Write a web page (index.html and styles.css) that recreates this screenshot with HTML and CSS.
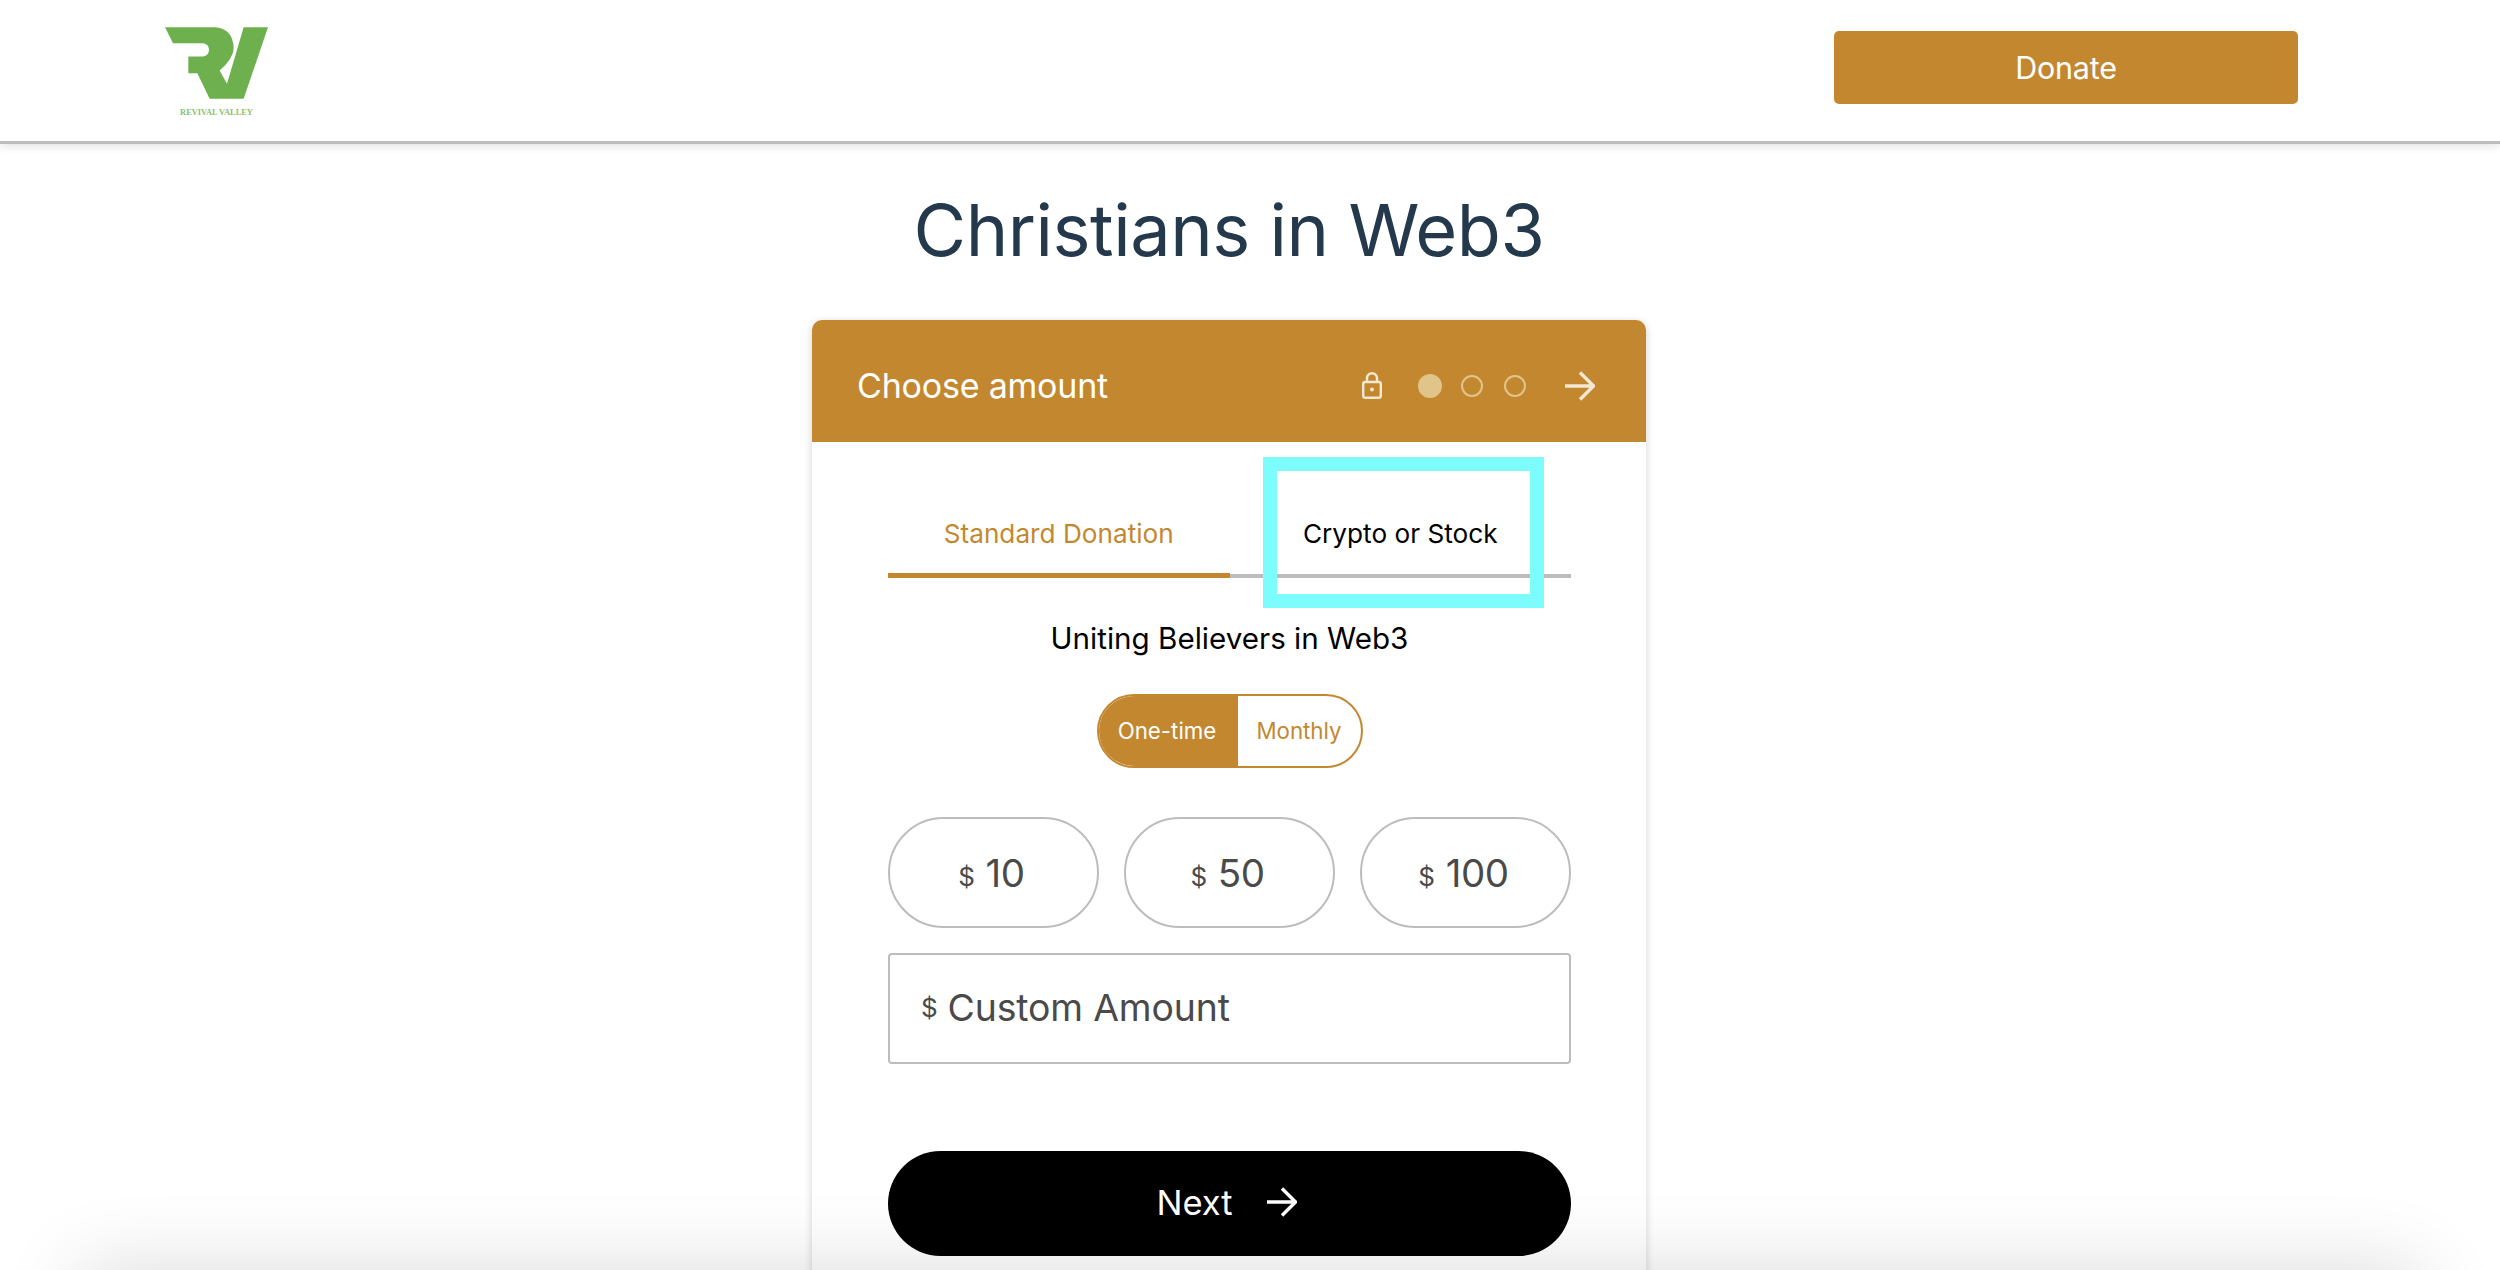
FILE: index.html

```html
<!DOCTYPE html>
<html lang="en">
<head>
    <meta charset="utf-8">
    <title>Christians in Web3</title>
    <link rel="stylesheet" href="styles.css">
</head>
<body>
    <header class="site-nav">
        <a class="logo" href="#">
            <svg class="logo-mark" viewBox="136 82 309 215" aria-hidden="true">
                <path d="M136 82 H285 Q340 85 342 145 Q342 175 300 212 L322 252 L372 82 H445 L372 297 H270 L233 220 H206 V170 H250 Q268 168 268 150 Q268 132 250 130 H160 Z"/>
            </svg>
            <span class="logo-text">REVIVAL VALLEY</span>
        </a>
        <button type="button" class="donate-btn">Donate</button>
    </header>

    <main class="page">
        <h1 class="page-title">Christians in Web3</h1>

        <section class="card">
            <div class="card-head">
                <h2 class="card-title">Choose amount</h2>
                <div class="steps">
                    <svg class="lock-icon" viewBox="0 0 20 27" aria-hidden="true">
                        <rect x="1.2" y="10" width="17.6" height="15.8" rx="2"/>
                        <path d="M5 10 V6.2 a5 5 0 0 1 10 0 V10"/>
                        <circle class="lock-dot" cx="10" cy="17.5" r="2"/>
                    </svg>
                    <span class="step step-on"></span>
                    <span class="step"></span>
                    <span class="step"></span>
                    <svg class="step-arrow" viewBox="0 0 30 30" aria-hidden="true">
                        <path d="M0 15 H28 M15 1.5 L28.5 15 L15 28.5"/>
                    </svg>
                </div>
            </div>

            <div class="card-body">
                <div class="tabs">
                    <div class="tab tab-on">Standard Donation</div>
                    <div class="tab">Crypto or Stock<span class="tab-mark"></span></div>
                </div>

                <p class="cause">Uniting Believers in Web3</p>

                <div class="freq">
                    <div class="freq-opt freq-on">One-time</div>
                    <div class="freq-opt">Monthly</div>
                </div>

                <div class="amounts">
                    <button type="button" class="amount"><span class="cur">$</span>10</button>
                    <button type="button" class="amount"><span class="cur">$</span>50</button>
                    <button type="button" class="amount"><span class="cur">$</span>100</button>
                </div>

                <div class="custom"><span class="cur cur-small">$</span>Custom Amount</div>

                <button type="button" class="next-btn">
                    Next
                    <svg class="next-arrow" viewBox="0 0 30 30" aria-hidden="true">
                        <path d="M0 15 H28 M15 1.5 L28.5 15 L15 28.5"/>
                    </svg>
                </button>
            </div>
        </section>
    </main>

    <div class="bottom-fade"></div>
</body>
</html>
```

FILE: styles.css

```css
html, body {
  height: 100%;
}

body {
  margin: 0;
  overflow: hidden;
  background-color: #FFF;
  color: #000;
  font-family: Inter, "Liberation Sans", sans-serif;
}

button {
  border: none;
  font-family: inherit;
  cursor: pointer;
}

.site-nav {
  display: flex;
  justify-content: space-between;
  align-items: flex-start;
  box-sizing: border-box;
  height: 144px;
  padding: 27px 202px 0 165px;
  border-bottom: 3px solid #BDBDBD;
  box-shadow: 0 3px 8px rgba(0, 0, 0, 0.1);
}

.logo {
  display: flex;
  flex-direction: column;
  align-items: center;
  width: 103px;
  text-decoration: none;
}

.logo-mark {
  width: 103px;
  height: 72px;
  fill: #6FB04E;
}

.logo-text {
  margin-top: 9px;
  color: #8CC070;
  font-family: "Liberation Serif", serif;
  font-size: 8.4px;
  font-weight: bold;
  white-space: nowrap;
}

.donate-btn {
  width: 464px;
  height: 73px;
  margin-top: 4px;
  background-color: #C3882F;
  color: #FFF;
  border-radius: 5px;
  font-size: 30.5px;
  letter-spacing: -0.2px;
}

.page {
  padding-right: 42px;
}

.page-title {
  margin: 39px 0 0;
  color: #24394C;
  font-size: 72px;
  font-weight: 400;
  letter-spacing: -0.45px;
  line-height: 93px;
  text-align: center;
}

.card {
  width: 834px;
  margin: 44px auto 0;
  border-radius: 10px 10px 0 0;
  box-shadow: 0 2px 8px rgba(0, 0, 0, 0.18);
}

.card-head {
  display: flex;
  justify-content: space-between;
  align-items: center;
  box-sizing: border-box;
  height: 122px;
  padding: 9px 51px 0 45px;
  background-color: #C3882F;
  border-radius: 10px 10px 0 0;
}

.card-title {
  margin: 0;
  color: #FFF;
  font-size: 34px;
  font-weight: 400;
  letter-spacing: -0.2px;
}

.steps {
  display: flex;
  align-items: center;
}

.lock-icon {
  width: 20px;
  height: 27px;
  margin-right: 36px;
  fill: none;
  stroke: #F5E8D2;
  stroke-width: 2.4;
}

.lock-dot {
  fill: #F5E8D2;
  stroke: none;
}

.step {
  box-sizing: border-box;
  width: 22px;
  height: 22px;
  margin-right: 21px;
  border: 2px solid #E0C48A;
  border-radius: 50%;
}

.step-on {
  width: 24px;
  height: 24px;
  margin-right: 19px;
  background-color: #E0C48A;
}

.step-arrow {
  width: 30px;
  height: 30px;
  margin-left: 18px;
  fill: none;
  stroke: #F5E8D2;
  stroke-width: 3.4;
}

.card-body {
  padding: 48px 75px 40px 76px;
  background-color: #FFF;
}

.tabs {
  display: flex;
  align-items: flex-end;
}

.tab {
  position: relative;
  flex: 1;
  height: 84px;
  border-bottom: 4px solid #BDBDBD;
  font-size: 26.2px;
  line-height: 87px;
  text-align: center;
}

.tab-on {
  height: 83px;
  border-bottom: 5px solid #C3882F;
  color: #C3882F;
}

/* caixa de destaque por cima da aba */
.tab-mark {
  position: absolute;
  top: -33px;
  left: 33px;
  width: 253px;
  height: 123px;
  border: 14px solid #7CFCFC;
}

.cause {
  margin: 40px 0 0;
  font-size: 29.6px;
  line-height: 40px;
  text-align: center;
}

.freq {
  display: flex;
  box-sizing: border-box;
  width: 266px;
  height: 74px;
  margin: 36px auto 0;
  border: 2px solid #C3882F;
  border-radius: 37px;
  overflow: hidden;
  font-size: 22.3px;
  line-height: 70px;
  text-align: center;
}

.freq-opt {
  flex: 1;
  color: #C3882F;
}

.freq-on {
  flex: 0 0 139px;
  padding-right: 2px;
  box-sizing: border-box;
  background-color: #C3882F;
  color: #FFF;
}

.amounts {
  display: grid;
  grid-template-columns: repeat(3, 1fr);
  gap: 25px;
  margin-top: 49px;
}

.amount {
  height: 111px;
  padding: 0 4px 0 0;
  background-color: #FFF;
  color: #4A4A4A;
  border: 2px solid #BDBDBD;
  border-radius: 56px;
  font-size: 38.5px;
  letter-spacing: -0.4px;
}

.cur {
  margin-right: 11px;
  font-size: 26px;
  vertical-align: 1px;
}

.cur-small {
  margin-right: 10px;
  vertical-align: 4px;
}

.custom {
  box-sizing: border-box;
  height: 111px;
  margin-top: 25px;
  padding-left: 31px;
  color: #4A4A4A;
  border: 2px solid #BDBDBD;
  border-radius: 4px;
  font-size: 37.4px;
  letter-spacing: -0.15px;
  line-height: 105px;
}

.next-btn {
  display: flex;
  justify-content: center;
  align-items: center;
  gap: 34px;
  box-sizing: border-box;
  width: 100%;
  height: 105px;
  margin-top: 87px;
  padding: 0 6px 3px 0;
  background-color: #000;
  color: #FFF;
  border-radius: 53px;
  font-size: 34.5px;
}

.next-arrow {
  width: 30px;
  height: 30px;
  fill: none;
  stroke: #FFF;
  stroke-width: 3.4;
}

.bottom-fade {
  position: fixed;
  left: 80px;
  right: 80px;
  bottom: -200px;
  height: 200px;
  box-shadow: 0 0 80px rgba(0, 0, 0, 0.15);
  pointer-events: none;
}
```
